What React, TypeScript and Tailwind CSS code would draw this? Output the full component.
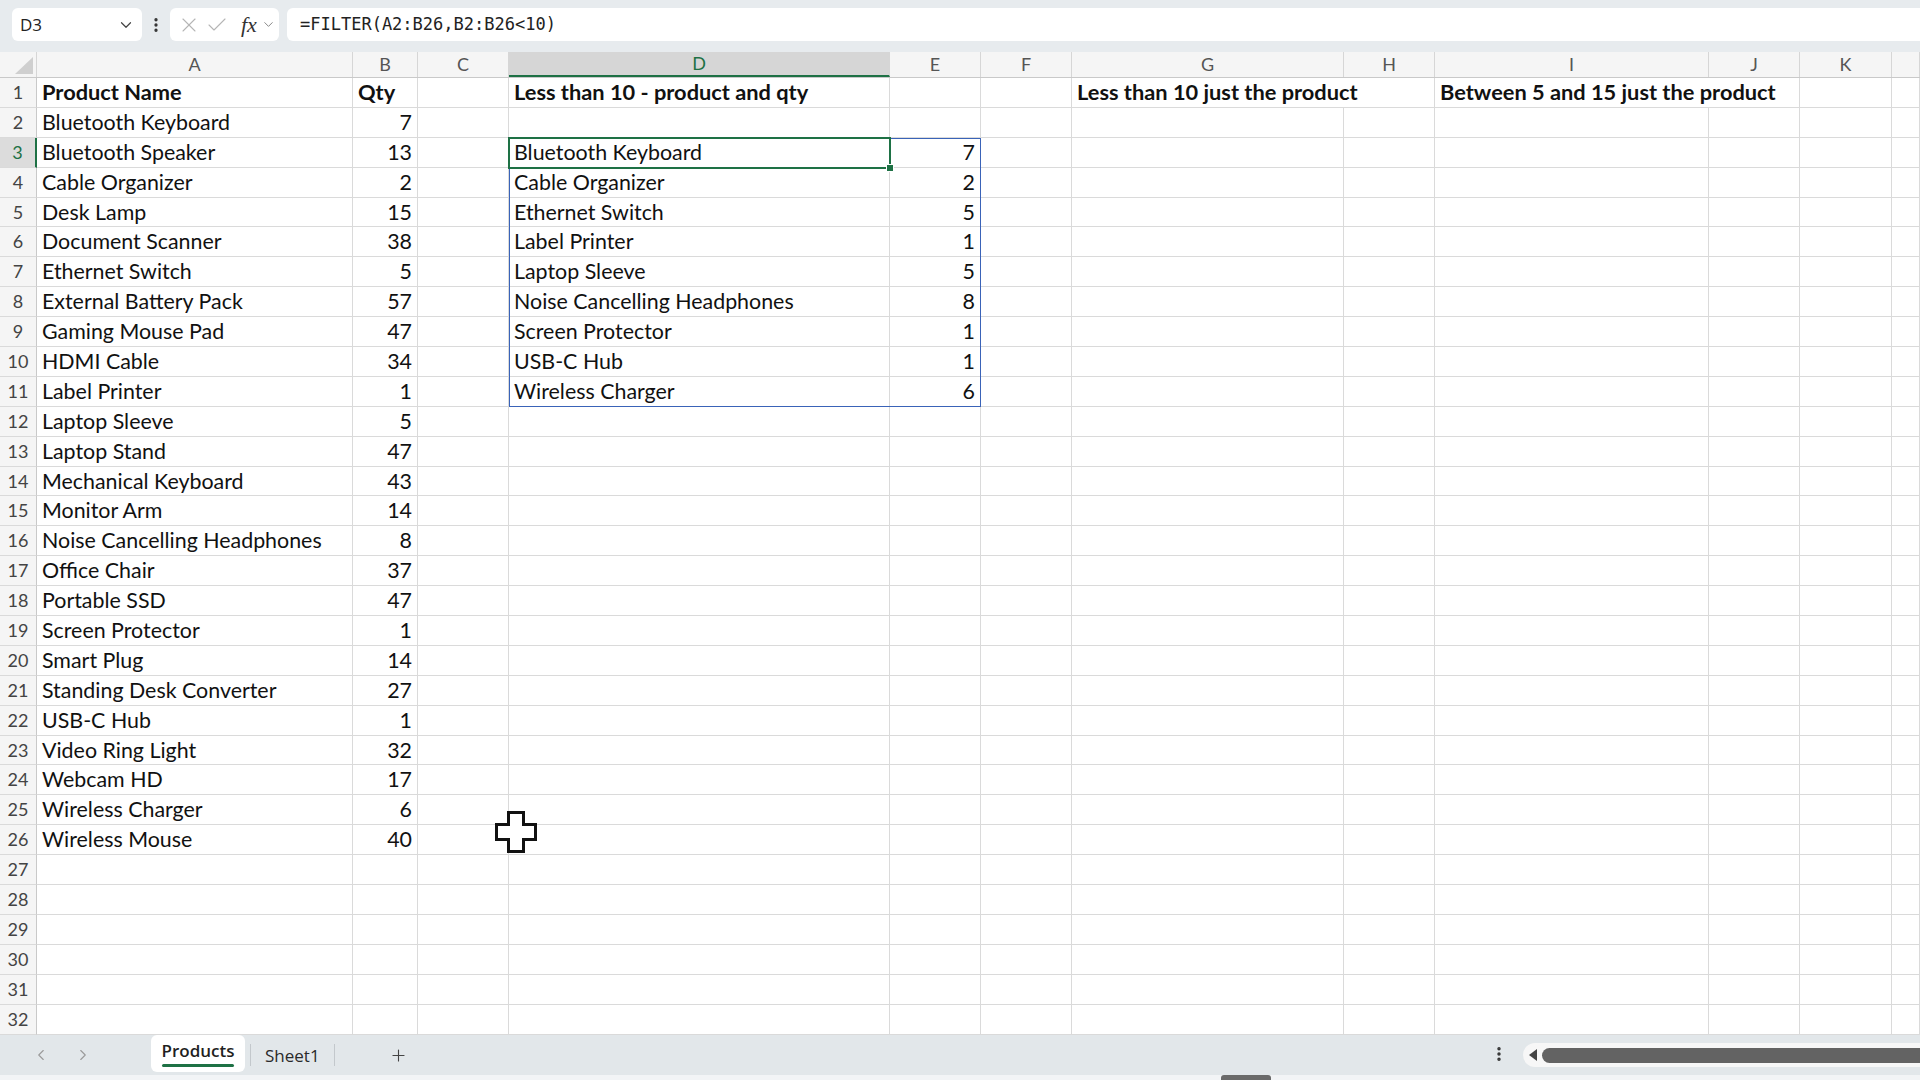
import React from "react";
import { ChevronDown, ChevronLeft, ChevronRight, X, Check, Plus, EllipsisVertical } from "lucide-react";

const products: [string, number][] = [
  ["Bluetooth Keyboard", 7],
  ["Bluetooth Speaker", 13],
  ["Cable Organizer", 2],
  ["Desk Lamp", 15],
  ["Document Scanner", 38],
  ["Ethernet Switch", 5],
  ["External Battery Pack", 57],
  ["Gaming Mouse Pad", 47],
  ["HDMI Cable", 34],
  ["Label Printer", 1],
  ["Laptop Sleeve", 5],
  ["Laptop Stand", 47],
  ["Mechanical Keyboard", 43],
  ["Monitor Arm", 14],
  ["Noise Cancelling Headphones", 8],
  ["Office Chair", 37],
  ["Portable SSD", 47],
  ["Screen Protector", 1],
  ["Smart Plug", 14],
  ["Standing Desk Converter", 27],
  ["USB-C Hub", 1],
  ["Video Ring Light", 32],
  ["Webcam HD", 17],
  ["Wireless Charger", 6],
  ["Wireless Mouse", 40],
];

const filtered = products.filter(([, q]) => q < 10);

const letters = ["A", "B", "C", "D", "E", "F", "G", "H", "I", "J", "K", ""];
const widths = [
  "w-[316px]",
  "w-[65px]",
  "w-[91px]",
  "w-[381px]",
  "w-[91px]",
  "w-[91px]",
  "w-[272px]",
  "w-[91px]",
  "w-[274px]",
  "w-[91px]",
  "w-[92px]",
  "flex-1",
];

type CellData = { text?: string | number; bold?: boolean; right?: boolean; spill?: boolean };

function rowCells(r: number): CellData[] {
  const cells: CellData[] = letters.map(() => ({}));
  if (r === 1) {
    cells[0] = { text: "Product Name", bold: true };
    cells[1] = { text: "Qty", bold: true };
    cells[3] = { text: "Less than 10 - product and qty", bold: true };
    cells[6] = { text: "Less than 10 just the product", bold: true, spill: true };
    cells[8] = { text: "Between 5 and 15 just the product", bold: true, spill: true };
    return cells;
  }
  const p = products[r - 2];
  if (p) {
    cells[0] = { text: p[0] };
    cells[1] = { text: p[1], right: true };
  }
  const f = filtered[r - 3];
  if (r >= 3 && f) {
    cells[3] = { text: f[0] };
    cells[4] = { text: f[1], right: true };
  }
  return cells;
}

function Toolbar() {
  return (
    <div className="h-[52px] shrink-0 flex items-start pt-[8px] pl-[12px] bg-[#e7ebee]">
      <div className="w-[130px] h-[33px] bg-white rounded-[6px] flex items-center justify-between pl-[8px] pr-[7px] font-['Open_Sans'] text-[17px] text-[#222]">
        <span>D3</span>
        <ChevronDown size={18} strokeWidth={1.6} className="text-[#444]" />
      </div>
      <div className="w-[28px] h-[33px] flex items-center justify-center text-[#333]">
        <EllipsisVertical size={18} strokeWidth={2.4} />
      </div>
      <div className="w-[109px] h-[33px] bg-white rounded-[6px] flex items-center pl-[7px] gap-[4px]">
        <X size={24} strokeWidth={1.1} className="text-[#b5b5b5]" />
        <Check size={24} strokeWidth={1.1} className="text-[#b5b5b5]" />
        <span className="ml-[8px] font-['Liberation_Serif'] italic text-[22px] text-[#333] leading-none">fx</span>
        <ChevronDown size={15} strokeWidth={1.4} className="text-[#777]" />
      </div>
      <div className="ml-[8px] flex-1 h-[33px] bg-white rounded-l-[6px] flex items-center pl-[13px] font-['DejaVu_Sans_Mono'] text-[17px] text-[#222]">
        =FILTER(A2:B26,B2:B26&lt;10)
      </div>
    </div>
  );
}

function ColumnHeader() {
  return (
    <div className="h-[26px] shrink-0 flex bg-[#f5f5f5] border-b border-[#c9c9c9] font-['Lato'] text-[18px] text-[#555]">
      <div className="w-[37px] shrink-0 border-r border-[#d6d6d6] relative">
        <svg className="absolute left-[15px] top-[5px]" width="18" height="17" viewBox="0 0 18 17">
          <polygon points="18,0 18,17 0,17" fill="#cfcfcf" />
        </svg>
      </div>
      {letters.map((l, i) => (
        <div
          key={i}
          className={`${widths[i]} shrink-0 flex items-center justify-center border-r border-[#d6d6d6] ${
            l === "D" ? "bg-[#d6d6d6] text-[#1e7145] border-b-2 border-b-[#1e7145]" : ""
          }`}
        >
          {l}
        </div>
      ))}
    </div>
  );
}

function Row({ r }: { r: number }) {
  const cells = rowCells(r);
  const selected = r === 3;
  return (
    <div className="h-[29.9px] shrink-0 flex font-['Lato'] text-[21.4px] leading-[28px] text-[#111]">
      <div
        className={`w-[37px] shrink-0 text-center text-[18px] leading-[29px] border-b border-[#dadada] ${
          selected
            ? "bg-[#dcdcdc] text-[#1e7145] border-r-2 border-r-[#1e7145]"
            : "bg-[#f5f5f5] text-[#444] border-r border-r-[#c9c9c9]"
        }`}
      >
        {r}
      </div>
      {cells.map((c, i) => (
        <div
          key={i}
          className={`${widths[i]} shrink-0 border-b border-[#dadada] whitespace-nowrap px-[5px] ${
            c.spill ? "overflow-visible relative z-10" : "overflow-hidden border-r border-r-[#dadada]"
          } ${c.right ? "text-right" : ""} ${c.bold ? "font-bold text-[21.8px]" : ""}`}
        >
          {c.text}
        </div>
      ))}
    </div>
  );
}

function Grid() {
  const rows = Array.from({ length: 32 }, (_, i) => i + 1);
  return (
    <div className="relative flex-1 flex flex-col bg-white overflow-hidden">
      <ColumnHeader />
      {rows.map((r) => (
        <Row key={r} r={r} />
      ))}
      {/* spill range outline D3:E11 */}
      <div className="absolute left-[509px] top-[85.8px] w-[472px] h-[269.1px] border border-[#3a63b8] pointer-events-none" />
      {/* active cell D3 */}
      <div className="absolute left-[508px] top-[84.8px] w-[383px] h-[31.9px] border-2 border-[#1e7145] pointer-events-none">
        <div className="absolute -right-[5px] -bottom-[5px] w-[8px] h-[8px] bg-[#1e7145] border border-white" />
      </div>
      {/* mouse cursor */}
      <svg className="absolute left-[495px] top-[759px]" width="42" height="42" viewBox="0 0 42 42">
        <polygon
          points="13.5,1.5 28.5,1.5 28.5,13.5 40.5,13.5 40.5,28.5 28.5,28.5 28.5,40.5 13.5,40.5 13.5,28.5 1.5,28.5 1.5,13.5 13.5,13.5"
          fill="white"
          stroke="#111"
          strokeWidth="3"
        />
      </svg>
    </div>
  );
}

function SheetTabs() {
  return (
    <div className="h-[40px] shrink-0 bg-[#e2e7ea] flex items-start relative font-['Open_Sans'] text-[17px]">
      <div className="w-[151px] h-[40px] flex items-center pl-[32px] gap-[24px] text-[#9a9a9a]">
        <ChevronLeft size={18} strokeWidth={1.5} />
        <ChevronRight size={18} strokeWidth={1.5} />
      </div>
      <div className="w-[94px] h-[37px] bg-white rounded-[6px] flex flex-col items-center justify-center">
        <span className="font-semibold text-[#1f1f1f] leading-[22px]">Products</span>
        <div className="w-[72px] h-[3px] bg-[#1e7145] rounded-full mt-[2px]" />
      </div>
      <div className="mt-[9px] w-px h-[22px] bg-[#c3c8cc] ml-[5px]" />
      <div className="h-[40px] flex items-center pt-[2px] px-[14px] text-[#2a2a2a]">Sheet1</div>
      <div className="mt-[9px] w-px h-[22px] bg-[#c3c8cc]" />
      <div className="h-[40px] flex items-center ml-[54px] text-[#444]">
        <Plus size={19} strokeWidth={1.4} />
      </div>
      <div className="absolute left-[1490px] top-[10px] text-[#333]">
        <EllipsisVertical size={18} strokeWidth={2.6} />
      </div>
      <div className="absolute left-[1523px] top-[8px] right-0 h-[24px] bg-[#f7f7f7] rounded-l-full flex items-center pl-[6px]">
        <svg width="8" height="12" viewBox="0 0 8 12">
          <polygon points="8,0 8,12 0,6" fill="#444" />
        </svg>
        <div className="ml-[5px] flex-1 h-[15px] bg-[#636363] rounded-l-full" />
      </div>
    </div>
  );
}

export default function App() {
  return (
    <div className="w-[1920px] h-[1080px] flex flex-col overflow-hidden bg-[#e7ebee]">
      <Toolbar />
      <Grid />
      <SheetTabs />
      <div className="h-[5px] shrink-0 bg-[#f2f4f6] relative">
        <div className="absolute left-[1221px] top-0 w-[50px] h-[5px] bg-[#6a6a6a] rounded-t-[3px]" />
      </div>
    </div>
  );
}
